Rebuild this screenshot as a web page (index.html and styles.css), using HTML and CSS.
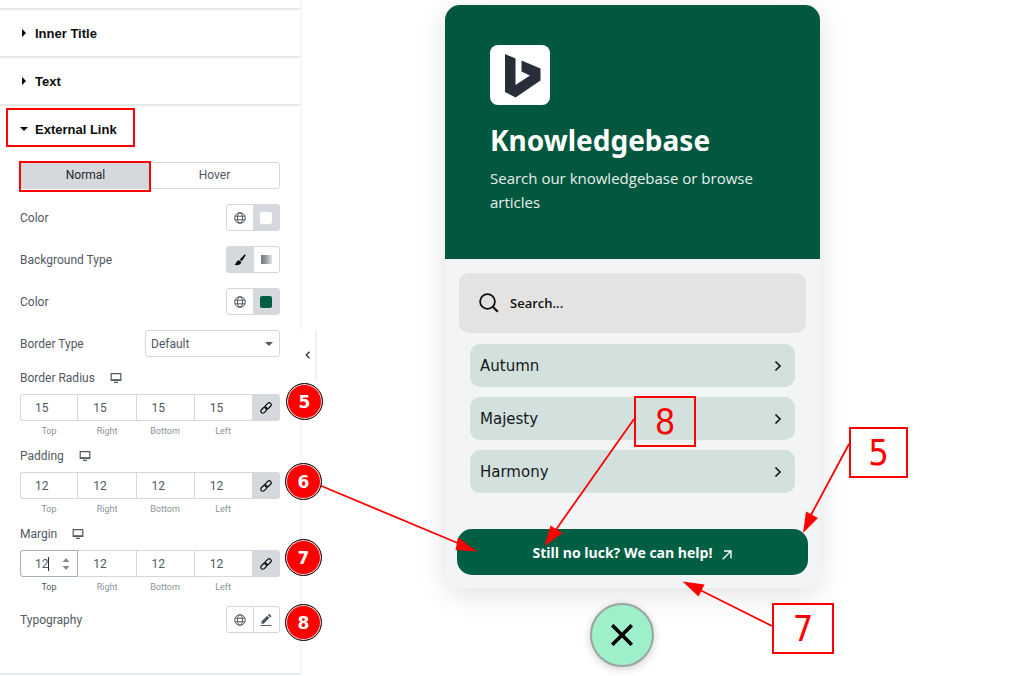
FILE: index.html
```html
<!DOCTYPE html>
<html lang="en">
<head>
<meta charset="utf-8">
<meta name="viewport" content="width=device-width, initial-scale=1">
<title>Knowledgebase widget settings</title>
<link rel="stylesheet" href="styles.css">
</head>
<body>

<!-- shared icons -->
<svg class="sprite" aria-hidden="true">
  <symbol id="globe" viewBox="0 0 12 12"><g fill="none" stroke="currentColor"><circle cx="6" cy="6" r="5.3"/><ellipse cx="6" cy="6" rx="2.5" ry="5.3"/><path d="M1 4.2h10M1 7.8h10"/></g></symbol>
  <symbol id="desktop" viewBox="0 0 12 10"><path d="M1.2.7h9.6v6.6H1.2z" fill="none" stroke="currentColor" stroke-width="1.2"/><path d="M1 6.2h10v1.6H1zM4 8.7h4V10H4z" fill="currentColor"/></symbol>
  <symbol id="link" viewBox="0 0 12 12"><g fill="none" stroke="currentColor" stroke-width="1.2" transform="rotate(-45 6 6)"><rect x="-.5" y="4" width="7.200" height="4" rx="2"/><rect x="5.300" y="4" width="7.200" height="4" rx="2"/></g></symbol>
  <symbol id="chevron" viewBox="0 0 8 12"><path d="M1.5 1.5 6 6l-4.500 4.500" fill="none" stroke="currentColor" stroke-width="1.700"/></symbol>
</svg>

<div class="editor">
  <aside class="panel">
    <div class="section"><button class="heading" type="button"><svg class="caret" viewBox="0 0 8 8"><path d="M2 0l4 4-4 4z"/></svg>Inner Title</button></div>
    <div class="section"><button class="heading" type="button"><svg class="caret" viewBox="0 0 8 8"><path d="M2 0l4 4-4 4z"/></svg>Text</button></div>
    <div class="section section-open">
      <button class="heading" type="button"><svg class="caret" viewBox="0 0 8 8"><path d="M0 2h8L4 6z"/></svg>External Link</button>
      <div class="controls">
        <div class="tabs">
          <button class="tab active" type="button">Normal</button>
          <button class="tab" type="button">Hover</button>
        </div>

        <div class="row">
          <span>Color</span>
          <div class="group">
            <button type="button" aria-label="Global color"><svg class="icon"><use href="#globe"/></svg></button>
            <button type="button" class="on" aria-label="Text color"><span class="swatch"></span></button>
          </div>
        </div>
        <div class="row">
          <span>Background Type</span>
          <div class="group">
            <button type="button" class="on" aria-label="Classic"><svg class="icon" viewBox="0 0 12 12"><path d="M10.300.8c.8-.6 1.600.1 1.100.9L7.700 7.300 5.700 5.700zM5 6.200l2.200 1.900c-.1 2.500-2.500 3.700-6.800 2.700C2.500 9.900 1.700 7 5 6.200z" fill="#000"/></svg></button>
            <button type="button" aria-label="Gradient"><span class="gradient"></span></button>
          </div>
        </div>
        <div class="row">
          <span>Color</span>
          <div class="group">
            <button type="button" aria-label="Global color"><svg class="icon"><use href="#globe"/></svg></button>
            <button type="button" class="on" aria-label="Background color"><span class="swatch green"></span></button>
          </div>
        </div>
        <div class="row">
          <label for="border-type">Border Type</label>
          <div class="select">
            <select id="border-type"><option>Default</option></select>
            <svg viewBox="0 0 8 4"><path d="M0 0h8L4 4z"/></svg>
          </div>
        </div>

        <div class="dimensions">
          <div class="dim-title">Border Radius <svg class="device"><use href="#desktop"/></svg></div>
          <div class="dim-inputs">
            <input type="text" id="r-top" value="15"><input type="text" id="r-right" value="15"><input type="text" id="r-bottom" value="15"><input type="text" id="r-left" value="15">
            <button type="button" aria-label="Link values"><svg class="icon"><use href="#link"/></svg></button>
          </div>
          <div class="dim-labels"><label for="r-top">Top</label><label for="r-right">Right</label><label for="r-bottom">Bottom</label><label for="r-left">Left</label></div>
        </div>

        <div class="dimensions">
          <div class="dim-title">Padding <svg class="device"><use href="#desktop"/></svg></div>
          <div class="dim-inputs">
            <input type="text" id="p-top" value="12"><input type="text" id="p-right" value="12"><input type="text" id="p-bottom" value="12"><input type="text" id="p-left" value="12">
            <button type="button" aria-label="Link values"><svg class="icon"><use href="#link"/></svg></button>
          </div>
          <div class="dim-labels"><label for="p-top">Top</label><label for="p-right">Right</label><label for="p-bottom">Bottom</label><label for="p-left">Left</label></div>
        </div>

        <div class="dimensions">
          <div class="dim-title">Margin <svg class="device"><use href="#desktop"/></svg></div>
          <div class="dim-inputs">
            <input class="focused" type="text" id="m-top" value="12"><input type="text" id="m-right" value="12"><input type="text" id="m-bottom" value="12"><input type="text" id="m-left" value="12">
            <button type="button" aria-label="Link values"><svg class="icon"><use href="#link"/></svg></button>
            <span class="text-cursor"></span>
            <svg class="spinner" viewBox="0 0 8 14"><path d="M.5 5 4 1l3.500 4zM.5 9 4 13l3.500-4z"/></svg>
          </div>
          <div class="dim-labels"><label class="current" for="m-top">Top</label><label for="m-right">Right</label><label for="m-bottom">Bottom</label><label for="m-left">Left</label></div>
        </div>

        <div class="row">
          <span>Typography</span>
          <div class="group">
            <button type="button" aria-label="Global font"><svg class="icon"><use href="#globe"/></svg></button>
            <button type="button" aria-label="Edit typography"><svg class="icon" viewBox="0 0 12 13"><path d="M1 8 7.200 1.800l2.500 2.500L3.500 10.500H1zM8 1 8.800.3c.4-.4.8-.4 1.200 0l1.500 1.500c.4.4.4.8 0 1.200l-1 .700zM.2 11.800h11.600V13H.2z" fill="currentColor"/></svg></button>
          </div>
        </div>
      </div>
    </div>
    <button class="collapse" type="button" aria-label="Hide panel"><svg viewBox="0 0 6 8"><path d="M4.500.8 1.300 4l3.200 3.200" fill="none" stroke="#333" stroke-width="1.300"/></svg></button>
  </aside>

  <main class="preview">
    <div class="widget">
      <header class="widget-head">
        <div class="logo"><svg viewBox="0 0 60 60"><path d="M15 9l10.500 4.500v26.500L40 30.500l-8.500-4V15.500L50.500 23.500v12L25.500 52.500 15 47z" fill="#272e3a"/></svg></div>
        <h1>Knowledgebase</h1>
        <p>Search our knowledgebase or browse articles</p>
      </header>
      <div class="widget-body">
        <div class="search">
          <svg viewBox="0 0 20 20"><g fill="none" stroke="#111" stroke-width="1.800"><circle cx="8.500" cy="8.500" r="7.400"/><path d="M13.800 13.800l5 5" stroke-width="2.200"/></g></svg>
          <input type="text" placeholder="Search..." aria-label="Search">
        </div>
        <nav class="topics">
          <a href="#">Autumn<svg><use href="#chevron"/></svg></a>
          <a href="#">Majesty<svg><use href="#chevron"/></svg></a>
          <a href="#">Harmony<svg><use href="#chevron"/></svg></a>
        </nav>
        <a class="external" href="#">Still no luck? We can help!<svg viewBox="0 0 10 10"><path d="M.7 9.300 9 1M2 1h7v7.500" fill="none" stroke="#fff" stroke-width="1.300"/></svg></a>
      </div>
    </div>
    <button class="close" type="button" aria-label="Close"><svg viewBox="0 0 22 22"><path d="M1.200 1.200l19.600 19.600M20.800 1.200 1.200 20.800" stroke="#000" stroke-width="3.600"/></svg></button>
  </main>

  <!-- numbered notes and arrows over the screen -->
  <div class="notes">
    <svg class="arrows" viewBox="0 0 1011 676">
      <g stroke="#f00" stroke-width="1.800">
        <path d="M319 485 460 544M634 419 555 531M849 444 811 515M772 626 700 590"/>
      </g>
      <g fill="#f00">
        <path d="M477 551.500 458 537.500 455.500 550z"/>
        <path d="M544.500 546 550.500 525.500 562.500 533z"/>
        <path d="M803 533 806 511.500 818 518z"/>
        <path d="M682.500 581.500 704.500 584.500 698.500 596.500z"/>
      </g>
    </svg>
    <span class="frame frame-heading"></span>
    <span class="frame frame-tab"></span>
    <span class="dot dot-5">5</span>
    <span class="dot dot-6">6</span>
    <span class="dot dot-7">7</span>
    <span class="dot dot-8">8</span>
    <span class="frame tag tag-8">8</span>
    <span class="frame tag tag-5">5</span>
    <span class="frame tag tag-7">7</span>
  </div>
</div>

</body>
</html>
```
FILE: styles.css
```css
* {
  box-sizing: border-box;
}
body {
  margin: 0;
  background: #fff;
  font-family: Roboto, sans-serif;
  font-size: 12px;
  color: #515962;
}
button, input, select {
  font: inherit;
  color: inherit;
  margin: 0;
  padding: 0;
  border: 0;
  background: none;
  border-radius: 0;
}
a {
  text-decoration: none;
}
svg {
  display: block;
}
.sprite {
  position: absolute;
  width: 0;
  height: 0;
}
.editor {
  display: flex;
  position: relative;
  min-height: 100vh;
  overflow: hidden;
}

/* settings panel */
.panel {
  position: relative;
  flex: none;
  width: 302px;
  padding-top: 8px;
  border-right: 2px solid #f5f6f6;
}
.section {
  border-top: 2px solid #e6e9ea;
}
.section-open {
  border-bottom: 2px solid #e6e9ea;
}
.heading {
  display: flex;
  align-items: center;
  width: 100%;
  height: 46px;
  padding-left: 20px;
  gap: 7px;
  font-family: "Liberation Sans", Arial, sans-serif;
  font-size: 13px;
  font-weight: 700;
  color: #0c0d0e;
}
.caret {
  width: 8px;
  height: 8px;
}
.controls {
  display: flex;
  flex-direction: column;
  gap: 15px;
  padding: 10px 20px 40px;
}
.tabs {
  display: flex;
  height: 27px;
  border: 1px solid #d5d8dc;
  border-radius: 3px;
}
.tab {
  flex: 1;
  padding-bottom: 2px;
}
.tab.active {
  background: #d5d8dc;
  color: #26292c;
}
.row {
  display: flex;
  align-items: center;
  justify-content: space-between;
  height: 27px;
}
.group {
  display: flex;
  width: 54px;
  height: 27px;
  border: 1px solid #d5d8dc;
  border-radius: 3px;
}
.group button {
  flex: 1;
  display: flex;
  align-items: center;
  justify-content: center;
}
.group button + button {
  border-left: 1px solid #d5d8dc;
}
.group .on {
  background: #d5d8dc;
}
.icon {
  width: 12px;
  height: 12px;
  overflow: visible;
}
.swatch {
  width: 12px;
  height: 12px;
  border-radius: 2px;
  background: #fff;
}
.swatch.green {
  background: #005e43;
}
.gradient {
  width: 11px;
  height: 9px;
  background: linear-gradient(90deg, #777c82 10%, #9da1a6 50%, #e1e3e5);
}
.select {
  display: grid;
  align-items: center;
  width: 135px;
}
.select select {
  grid-area: 1 / 1;
  height: 27px;
  padding-left: 5px;
  border: 1px solid #d5d8dc;
  border-radius: 3px;
  appearance: none;
}
.select svg {
  grid-area: 1 / 1;
  justify-self: end;
  width: 8px;
  height: 4px;
  margin-right: 7px;
  fill: #515962;
  pointer-events: none;
}
.dim-title {
  display: flex;
  align-items: center;
  gap: 15px;
  height: 12px;
  margin-bottom: 10px;
}
.device {
  width: 12px;
  height: 10px;
}
.dim-inputs {
  display: flex;
  position: relative;
  height: 27px;
}
.dim-inputs input {
  flex: 1;
  min-width: 0;
  padding-left: 15px;
  border: 1px solid #d5d8dc;
  border-right-width: 0;
}
.dim-inputs input:first-child {
  padding-left: 14px;
  border-radius: 3px 0 0 3px;
}
.dim-inputs .focused {
  border: 1px solid #a4afb7;
}
.dim-inputs .focused + input {
  border-left-width: 0;
}
.dim-inputs button {
  display: flex;
  align-items: center;
  justify-content: center;
  width: 28px;
  border-radius: 0 3px 3px 0;
  background: #d5d8dc;
  color: #0c0d0e;
}
.text-cursor {
  position: absolute;
  left: 28px;
  top: 7px;
  width: 1px;
  height: 14px;
  background: #26292c;
}
.spinner {
  position: absolute;
  left: 42px;
  top: 7px;
  width: 8px;
  height: 14px;
  fill: #8a8a8a;
}
.dim-labels {
  display: flex;
  margin-right: 28px;
  padding-top: 6px;
  font-size: 9px;
  line-height: 8px;
  color: #8a939c;
}
.dim-labels label {
  flex: 1;
  text-align: center;
}
.dim-labels .current {
  color: #515962;
}
.collapse {
  position: absolute;
  left: 300px;
  top: 330px;
  display: flex;
  align-items: center;
  justify-content: center;
  width: 17px;
  height: 50px;
  background: #fff;
  border-right: 2px solid #f1f2f2;
}
.collapse svg {
  width: 6px;
  height: 8px;
}

/* widget preview */
.preview {
  flex: 1;
  padding: 5px 16px 9px 143px;
  font-family: "Open Sans", "Noto Sans", sans-serif;
}
.widget {
  max-width: 375px;
  border-radius: 15px;
  background: #f2f4f6;
  box-shadow: 0 6px 28px rgba(0, 0, 0, 0.12);
}
.widget-head {
  padding: 40px 45px 45px;
  border-radius: 15px 15px 0 0;
  background: #02573f;
  color: #fff;
}
.logo {
  width: 60px;
  height: 60px;
  border-radius: 8px;
  background: #fff;
}
.widget-head h1 {
  margin: 15px 0 6px;
  font-family: "Noto Sans", "Open Sans", sans-serif;
  font-size: 28px;
  line-height: 40px;
  font-weight: 700;
}
.widget-head p {
  margin: 0;
  font-size: 15px;
  line-height: 24px;
  color: #e6efec;
}
.widget-body {
  padding: 14px 12px 13px;
}
.search {
  display: flex;
  align-items: center;
  gap: 11px;
  height: 60px;
  margin: 0 2px 11px;
  padding: 0 20px;
  border-radius: 10px;
  background: #e5e3e1;
}
.search svg {
  width: 20px;
  height: 20px;
}
.search input {
  flex: 1;
  min-width: 0;
  font-size: 13px;
  font-weight: 600;
}
.search input::placeholder {
  color: #111;
  opacity: 1;
}
.topics {
  display: flex;
  flex-direction: column;
  gap: 10px;
  padding: 0 13px;
}
.topics a {
  display: flex;
  align-items: center;
  justify-content: space-between;
  height: 43px;
  padding: 0 13px 0 10px;
  border-radius: 10px;
  background: #d2e1dd;
  font-family: "DejaVu Sans", sans-serif;
  font-size: 15px;
  color: #15181a;
}
.topics svg {
  width: 8px;
  height: 12px;
}
.external {
  display: flex;
  align-items: center;
  justify-content: center;
  gap: 10px;
  height: 46px;
  margin-top: 36px;
  border-radius: 15px;
  background: #005e43;
  font-size: 14px;
  font-weight: 700;
  color: #fff;
}
.external svg {
  width: 10px;
  height: 10px;
  margin-top: 6px;
}
.close {
  display: flex;
  align-items: center;
  justify-content: center;
  width: 64px;
  height: 64px;
  margin: 15px 0 0 145px;
  border: 2px solid #9aa5a1;
  border-radius: 50%;
  background: #9ef0c8;
  box-shadow: 0 2px 8px rgba(0, 0, 0, 0.2);
}
.close svg {
  width: 22px;
  height: 22px;
}

/* notes */
.notes {
  position: absolute;
  left: 0;
  top: 0;
  pointer-events: none;
}
.arrows {
  width: 1011px;
  height: 676px;
}
.frame {
  position: absolute;
  border: 2px solid #f00;
}
.frame-heading {
  left: 6px;
  top: 108px;
  width: 129px;
  height: 39px;
}
.frame-tab {
  left: 19px;
  top: 161px;
  width: 132px;
  height: 31px;
}
.tag {
  display: flex;
  align-items: center;
  justify-content: center;
  width: 62px;
  height: 51px;
  font-family: "DejaVu Sans Condensed", "DejaVu Sans", sans-serif;
  font-size: 36px;
  line-height: 46px;
  color: #f00;
}
.tag-8 {
  left: 634px;
  top: 396px;
}
.tag-5 {
  left: 849px;
  top: 427px;
  width: 59px;
}
.tag-7 {
  left: 772px;
  top: 603px;
}
.dot {
  position: absolute;
  display: flex;
  align-items: center;
  justify-content: center;
  width: 37px;
  height: 37px;
  border: 1px solid #111;
  border-radius: 50%;
  background: #f00;
  box-shadow: inset 0 0 0 1px #ddd;
  font-family: "DejaVu Sans", sans-serif;
  font-size: 17px;
  font-weight: 700;
  color: #fff;
}
.dot-5 {
  left: 286px;
  top: 383px;
}
.dot-6 {
  left: 285px;
  top: 463px;
}
.dot-7 {
  left: 285px;
  top: 539px;
}
.dot-8 {
  left: 285px;
  top: 604px;
}
```
